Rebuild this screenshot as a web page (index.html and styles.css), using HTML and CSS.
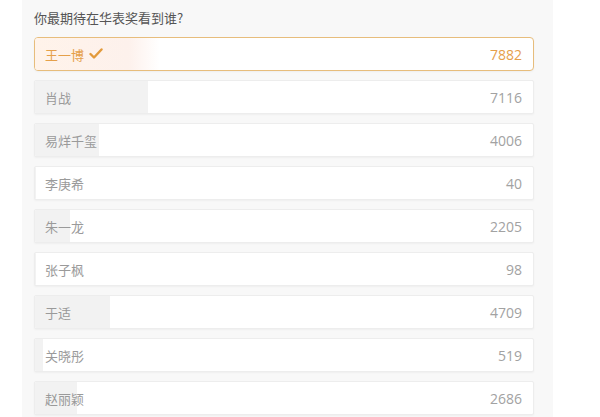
FILE: index.html
```html
<!DOCTYPE html>
<html lang="zh-CN">

<head>
    <meta charset="UTF-8">
    <meta name="viewport" content="width=device-width, initial-scale=1.0">
    <title>投票</title>
    <link rel="stylesheet" href="styles.css">
</head>

<body>
    <div class="vote-panel">
        <p class="vote-title">你最期待在华表奖看到谁?</p>
        <div class="vote-list">
            <div class="vote-item selected">
                <div class="vote-bar" style="width: 25%"></div>
                <span class="vote-name">王一博
                    <svg class="check" width="14" height="12" viewBox="0 0 14 12">
                        <polyline points="1.5,6 5,9.5 12.5,1.5" fill="none" stroke="#e39a3b" stroke-width="2.4"
                            stroke-linecap="round" stroke-linejoin="round" />
                    </svg>
                </span>
                <span class="vote-count">7882</span>
            </div>
            <div class="vote-item">
                <div class="vote-bar" style="width: 22.6%"></div>
                <span class="vote-name">肖战</span>
                <span class="vote-count">7116</span>
            </div>
            <div class="vote-item">
                <div class="vote-bar" style="width: 12.8%"></div>
                <span class="vote-name">易烊千玺</span>
                <span class="vote-count">4006</span>
            </div>
            <div class="vote-item">
                <div class="vote-bar" style="width: 0.2%"></div>
                <span class="vote-name">李庚希</span>
                <span class="vote-count">40</span>
            </div>
            <div class="vote-item">
                <div class="vote-bar" style="width: 7%"></div>
                <span class="vote-name">朱一龙</span>
                <span class="vote-count">2205</span>
            </div>
            <div class="vote-item">
                <div class="vote-bar" style="width: 0.3%"></div>
                <span class="vote-name">张子枫</span>
                <span class="vote-count">98</span>
            </div>
            <div class="vote-item">
                <div class="vote-bar" style="width: 15%"></div>
                <span class="vote-name">于适</span>
                <span class="vote-count">4709</span>
            </div>
            <div class="vote-item">
                <div class="vote-bar" style="width: 1.7%"></div>
                <span class="vote-name">关晓彤</span>
                <span class="vote-count">519</span>
            </div>
            <div class="vote-item">
                <div class="vote-bar" style="width: 8.5%"></div>
                <span class="vote-name">赵丽颖</span>
                <span class="vote-count">2686</span>
            </div>
        </div>
    </div>
</body>

</html>
```

FILE: styles.css
```css
:root {
    --panel-bg: #f8f8f8;
    --item-bg: #ffffff;
    --item-border: #ededed;
    --bar-bg: #f2f2f2;
    --text-gray: #9a9a9a;
    --count-gray: #a2a2a2;
    --accent: #e5a04a;
    --accent-border: #e7bd7c;
}

body {
    margin: 0;
    background: #ffffff;
    font-family: 'Noto Sans CJK SC', 'Liberation Sans', sans-serif;
}

.vote-panel {
    margin-left: 22px;
    width: 531px;
    min-height: 417px;
    box-sizing: border-box;
    background: var(--panel-bg);
    padding: 8px 19px 0 12px;
}

.vote-title {
    margin: 0 0 9px;
    font-size: 13px;
    line-height: 20px;
    color: #555;
}

.vote-list {
    display: flex;
    flex-direction: column;
    gap: 9px;
}

.vote-item {
    position: relative;
    height: 34px;
    box-sizing: border-box;
    display: flex;
    align-items: center;
    justify-content: space-between;
    padding: 0 11px 0 10px;
    background: var(--item-bg);
    border: 1px solid var(--item-border);
    border-radius: 2px;
    box-shadow: 0 1px 2px rgba(0, 0, 0, 0.04);
    overflow: hidden;
}

.vote-bar {
    position: absolute;
    left: 0;
    top: 0;
    bottom: 0;
    background: var(--bar-bg);
}

.vote-name,
.vote-count {
    position: relative;
    font-size: 13px;
    color: var(--text-gray);
}

.vote-count {
    font-family: 'Open Sans', 'Liberation Sans', sans-serif;
    font-size: 14px;
    color: var(--count-gray);
}

.vote-name {
    display: flex;
    align-items: center;
    gap: 5px;
}

.vote-item.selected {
    border-color: var(--accent-border);
    border-radius: 4px;
}

.vote-item.selected .vote-bar {
    background: linear-gradient(to right, #fff3ea, #fdf1ec 75%, #ffffff);
}

.vote-item.selected .vote-name,
.vote-item.selected .vote-count {
    color: var(--accent);
}
```
